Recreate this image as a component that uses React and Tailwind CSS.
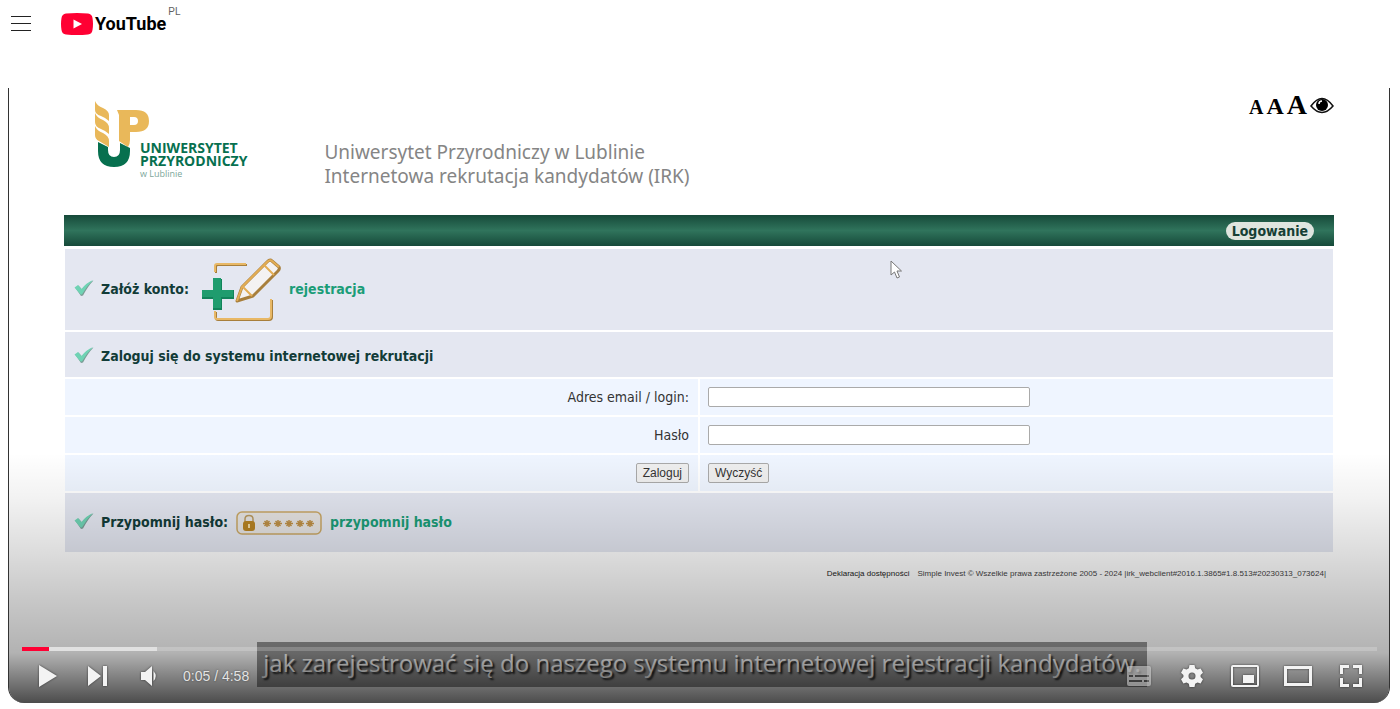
import { useState } from 'react';

function CheckMark() {
  return (
    <svg width="20" height="18" viewBox="0 0 20 18" className="mb-1 shrink-0" aria-hidden="true">
      <path d="M1.5 9 4.5 6.5 8 10.5 Q12 4.500 19.5 1.500 Q14 7 9 16.500 L7 17Z" fill="#7a9a94" />
      <path d="M0.5 8.500 4 6 7.500 10 Q12 4 19 1 Q13 7 8 15.500 L6.500 15.500Z" fill="#6fd3b4" />
    </svg>
  );
}

function UniversityLogo() {
  return (
    <div className="flex items-start">
      <svg width="56" height="68" viewBox="0 0 56 68" className="shrink-0" aria-hidden="true">
        <g fill="#e9b85a">
          <path d="M1 0Q3 5 9 7Q15 10 15 14V20Q12 17 7 15Q1 13 1 9Z" />
          <path d="M1 12Q3 17 9 19Q15 22 15 27V33Q12 30 7 28Q1 26 1 21Z" />
          <path d="M1 25Q3 30 9 32Q15 35 15 40V46L5 40Q1 38 1 34Z" />
          <path fillRule="evenodd" d="M23 9H42Q55 9 55 20T42 31H36V39Q36 43 34 46L25 40V14ZM36 16V24H40Q44 24 44 20T40 16Z" />
        </g>
        <path d="M4 41 14 46V49Q14 56 20 56T26 49V42L36 47V50Q36 66 20 66T4 50Z" fill="#07704f" />
      </svg>
      <div className="-ml-[10px] mt-10 font-['Open_Sans','Noto_Sans',sans-serif] text-[#07704f]">
        <p className="text-[14px] leading-[13px] font-bold">UNIWERSYTET</p>
        <p className="text-[14px] leading-[13px] font-bold">PRZYRODNICZY</p>
        <p className="text-[9px] leading-[13px] text-[#7ca79a]">w Lublinie</p>
      </div>
    </div>
  );
}

function RegisterIcon() {
  return (
    <svg width="80" height="64" viewBox="0 0 80 64" className="shrink-0" aria-hidden="true">
      <g fill="none" strokeLinejoin="round">
        <path d="M15 15V9Q15 7 17 7H46 M15 54V60Q15 62 17 62H68Q71 62 71 59V42" stroke="#a87f3c" strokeWidth="2" />
        <path d="M14 14V8Q14 6 16 6H45 M14 53V59Q14 61 16 61H67Q70 61 70 58V41" stroke="#e8b866" strokeWidth="2" />
        <path d="M36 43 41 29 66 4Q69 1 71 3L78 9Q79 11 77 13L52 38Z" fill="#f4f2f2" stroke="#a87f3c" strokeWidth="3" />
        <path d="M36 43 41 29 66 4Q69 1 71 3L78 9 M63 7 73 17 M42 29 51 38" stroke="#e3ad55" strokeWidth="2" />
      </g>
      <path d="M12 21H21V32H33V41H21V52H12V41H1V32H12Z" fill="#11835a" />
      <path d="M12 20H20V32H32V39H20V50H12V39H1V32H12Z" fill="#1f9c6e" />
    </svg>
  );
}

function PasswordIcon() {
  return (
    <svg width="86" height="24" viewBox="0 0 86 24" className="shrink-0" aria-hidden="true">
      <rect x="1" y="1" width="84" height="22" rx="5" fill="#e6e4e2" stroke="#c9a765" strokeWidth="1.500" />
      <path d="M9 11V8Q9 4.500 13 4.500T17 8V11" fill="none" stroke="#b99a61" strokeWidth="1.500" />
      <rect x="7" y="10" width="12" height="10" rx="3" fill="#b78322" />
      <path d="M12 13H14V17H12Z" fill="#efd9a4" />
      <path
        d="M27 12.500H35M31 9V16M28.500 10 33.500 15M33.500 10 28.500 15M38 12.500H46M42 9V16M39.500 10 44.500 15M44.500 10 39.500 15M49 12.500H57M53 9V16M50.500 10 55.500 15M55.500 10 50.500 15M60 12.500H68M64 9V16M61.500 10 66.500 15M66.500 10 61.500 15M70 12.500H78M74 9V16M71.500 10 76.500 15M76.500 10 71.500 15"
        stroke="#bd8f45"
        strokeWidth="1.500"
      />
    </svg>
  );
}

function EyeIcon() {
  return (
    <svg width="24" height="18" viewBox="0 0 24 18" aria-hidden="true">
      <path d="M1 10Q12-5 23 10Q12 23 1 10Z" fill="#fff" stroke="#111" strokeWidth="1.500" />
      <circle cx="12" cy="9" r="6" fill="#000" />
      <path d="M9 8Q9 5 12 5" fill="none" stroke="#fff" strokeWidth="1.500" />
    </svg>
  );
}

function PlayerButton({ label, className = 'w-[53px]', children }) {
  return (
    <button type="button" aria-label={label} className={`flex h-12 items-center justify-center ${className}`}>
      <svg width="36" height="36" viewBox="0 0 36 36" fill="#f3f3f3" className="drop-shadow-[0_0_1px_rgba(0,0,0,0.6)]">
        {children}
      </svg>
    </button>
  );
}

function Masthead() {
  return (
    <header className="flex h-12 items-center gap-7 px-[9px]">
      <button type="button" aria-label="Menu">
        <svg width="24" height="24" viewBox="0 0 24 24" fill="none" stroke="#222" strokeWidth="1">
          <path d="M2 4.500H22M2 11.500H22M2 18.500H22" />
        </svg>
      </button>
      <a href="#" className="flex items-center gap-0.5" aria-label="YouTube PL">
        <svg width="32" height="22" viewBox="0 0 32 22" aria-hidden="true">
          <path d="M5 .5Q16-.5 27 .5Q31 1 31.500 5Q32.500 11 31.500 17Q31 21 27 21.500Q16 22.500 5 21.500Q1 21 .5 17Q-.5 11 .5 5Q1 1 5 .5Z" fill="#ff0033" />
          <path d="M12.500 6.500V15.500L21 11Z" fill="#fff" />
        </svg>
        <span className="font-['Roboto',sans-serif] text-[18px] leading-6 font-bold text-black">YouTube</span>
        <span className="mb-6 font-['Liberation_Sans',sans-serif] text-[10px] leading-3 text-[#606060]">PL</span>
      </a>
    </header>
  );
}

function RecruitmentPage() {
  const [login, setLogin] = useState('');
  const [password, setPassword] = useState('');

  const handleReset = () => {
    setLogin('');
    setPassword('');
  };

  return (
    <div className="px-[55px] pt-[13px] pb-[123px] font-['DejaVu_Sans_Condensed','Noto_Sans',sans-serif]">
      <div className="flex h-[114px] items-start justify-between">
        <div className="flex gap-[77px] pl-[30px]">
          <UniversityLogo />
          <h1 className="mt-[39px] font-['Noto_Sans',sans-serif] text-[19px] leading-6 text-[#858585]">
            Uniwersytet Przyrodniczy w Lublinie
            <br />
            Internetowa rekrutacja kandydatów (IRK)
          </h1>
        </div>
        <div className="-mt-2 flex items-baseline gap-[3px] font-['Liberation_Serif',serif] font-bold text-black">
          <button type="button" className="text-[20px] leading-6">A</button>
          <button type="button" className="text-[24px] leading-6">A</button>
          <button type="button" className="text-[28px] leading-6">A</button>
          <button type="button" aria-label="Kontrast">
            <EyeIcon />
          </button>
        </div>
      </div>

      <nav className="flex h-[31px] items-center justify-end bg-linear-to-b from-[#164a3a] via-[#30745c] to-[#164a3a] pr-5">
        <a href="#" className="rounded-full bg-[#dfe5df] px-[6px] text-[14px] leading-[18px] font-bold text-[#163f35]">
          Logowanie
        </a>
      </nav>

      <form className="mx-px mt-[3px] flex flex-col gap-0.5 text-[14px] text-[#333]" onSubmit={(e) => e.preventDefault()}>
        <div className="flex h-[81px] items-center bg-[#e4e7f1] pl-[9px] font-bold text-[#123c38]">
          <CheckMark />
          <span className="ml-[7px]">Załóż konto:</span>
          <span className="ml-3">
            <RegisterIcon />
          </span>
          <a href="#" className="ml-2 text-[#1b9d78]">rejestracja</a>
        </div>
        <div className="flex h-[45px] items-center bg-[#e4e7f1] pt-1 pl-[9px] font-bold text-[#123c38]">
          <CheckMark />
          <h2 className="ml-[7px]">Zaloguj się do systemu internetowej rekrutacji</h2>
        </div>
        <div className="grid h-9 grid-cols-2 gap-0.5">
          <div className="flex items-center justify-end bg-[#eff5ff] pr-[9px]">
            <label htmlFor="login">Adres email / login:</label>
          </div>
          <div className="flex items-center bg-[#eff5ff] pl-2">
            <input
              id="login"
              type="text"
              value={login}
              onChange={(e) => setLogin(e.target.value)}
              className="h-5 w-[322px] rounded-xs border border-[#aaa] bg-white px-1"
            />
          </div>
        </div>
        <div className="grid h-9 grid-cols-2 gap-0.5">
          <div className="flex items-center justify-end bg-[#eff5ff] pr-[9px]">
            <label htmlFor="password">Hasło</label>
          </div>
          <div className="flex items-center bg-[#eff5ff] pl-2">
            <input
              id="password"
              type="password"
              value={password}
              onChange={(e) => setPassword(e.target.value)}
              className="h-5 w-[322px] rounded-xs border border-[#aaa] bg-white px-1"
            />
          </div>
        </div>
        <div className="grid h-9 grid-cols-2 gap-0.5 font-['Liberation_Sans',sans-serif] text-[12px]">
          <div className="flex items-center justify-end bg-[#eff5ff] pr-[9px]">
            <button type="submit" className="h-5 rounded-xs border border-[#aaa] bg-[#efefef] px-[6px]">Zaloguj</button>
          </div>
          <div className="flex items-center bg-[#eff5ff] pl-2">
            <button type="button" onClick={handleReset} className="h-5 rounded-xs border border-[#aaa] bg-[#efefef] px-[6px]">
              Wyczyść
            </button>
          </div>
        </div>
        <div className="flex h-[59px] items-center bg-[#e4e7f1] pl-[9px] font-bold text-[#123c38]">
          <CheckMark />
          <span className="ml-[7px]">Przypomnij hasło:</span>
          <span className="ml-2">
            <PasswordIcon />
          </span>
          <a href="#" className="ml-2 text-[#1b9d78]">przypomnij hasło</a>
        </div>
      </form>

      <footer className="mt-4 flex justify-end gap-2 pr-2 font-['Liberation_Sans',sans-serif] text-[8px] leading-3 text-[#444]">
        <a href="#" className="text-[#222]">Deklaracja dostępności</a>
        <span>Simple Invest © Wszelkie prawa zastrzeżone 2005 - 2024 |irk_webclient#2016.1.3865#1.8.513#20230313_073624|</span>
      </footer>
    </div>
  );
}

function Controls() {
  return (
    <div className="absolute inset-x-0 bottom-0 pr-3 pb-0.5 pl-[13px]">
      <div className="flex h-1 bg-white/20">
        <div className="w-[2%] bg-[#ff0033]" />
        <div className="w-[8%] bg-white/50" />
      </div>
      <div className="flex h-[50px] items-center justify-between">
        <div className="flex items-center">
          <PlayerButton label="Odtwórz" className="w-[51px]">
            <path d="M9 7V29L27 18Z" />
          </PlayerButton>
          <PlayerButton label="Następny" className="w-[51px]">
            <path d="M7 8V28L20 18ZM22 8H26V28H22Z" />
          </PlayerButton>
          <PlayerButton label="Wycisz" className="w-[51px]">
            <path d="M9 14V22H13L20 28V8L13 14ZM21.500 13Q26 18 21.500 23Z" />
          </PlayerButton>
          <span className="ml-2 font-['Liberation_Sans',sans-serif] text-[14px] text-[#e4e4e4] text-shadow-[0_0_2px_rgba(0,0,0,0.5)]">
            0:05 / 4:58
          </span>
        </div>
        <div className="flex items-center">
          <PlayerButton label="Napisy">
            <path
              fillRule="evenodd"
              opacity="0.5"
              d="M8 8H28Q30 8 30 10V26Q30 28 28 28H8Q6 28 6 26V10Q6 8 8 8ZM8 17V19H12V17ZM14 17V19H28V17ZM8 22V24H21V22ZM23 22V24H28V22Z"
            />
          </PlayerButton>
          <PlayerButton label="Ustawienia">
            <path
              fillRule="evenodd"
              d="M15.500 7H20.500L21.200 10.200L23.500 11.500L26.600 10.500L29 14.800L26.600 17V19L29 21.200L26.600 25.500L23.500 24.500L21.200 25.800L20.500 29H15.500L14.800 25.800L12.500 24.500L9.400 25.500L7 21.200L9.400 19V17L7 14.800L9.400 10.500L12.500 11.500L14.800 10.200ZM18 14.500A3.500 3.500 0 1 0 18 21.500A3.500 3.500 0 1 0 18 14.500Z"
            />
          </PlayerButton>
          <PlayerButton label="Miniodtwarzacz">
            <path fillRule="evenodd" d="M6 7H30Q32 7 32 9V27Q32 29 30 29H6Q4 29 4 27V9Q4 7 6 7ZM6 9V27H30V9ZM16 17H27V25H16Z" />
          </PlayerButton>
          <PlayerButton label="Tryb kinowy">
            <path fillRule="evenodd" d="M4 8H32V28H4ZM7 11V25H29V11Z" />
          </PlayerButton>
          <PlayerButton label="Pełny ekran">
            <path d="M7 7H16V10H10V16H7ZM20 7H29V16H26V10H20ZM7 20H10V26H16V29H7ZM26 20H29V29H20V26H26Z" />
          </PlayerButton>
        </div>
      </div>
    </div>
  );
}

export default function App() {
  return (
    <div className="bg-white">
      <Masthead />
      <main className="relative mt-10 mr-[10px] ml-[8px] overflow-hidden rounded-b-2xl border-x border-[#333] bg-white">
        <RecruitmentPage />
        <svg width="14" height="20" viewBox="0 0 14 20" className="absolute top-[172px] left-[881px]" aria-hidden="true">
          <path d="M1 1V15L4.500 12L7 18L9.500 17L7 11H11.500Z" fill="#fff" stroke="#777" />
        </svg>
        <div className="absolute inset-x-0 bottom-4 flex justify-center pl-[6px]">
          <p className="bg-black/42 px-[6px] pb-1 font-['Open_Sans',sans-serif] text-[24px] leading-[41px] whitespace-nowrap text-white text-shadow-[2px_2px_2px_rgba(0,0,0,0.9)]">
            jak zarejestrować się do naszego systemu internetowej rejestracji kandydatów.
          </p>
        </div>
        <div className="pointer-events-none absolute inset-x-0 bottom-0 h-[250px] bg-[linear-gradient(to_bottom,rgba(0,0,0,0)_0%,rgba(0,0,0,0.05)_18%,rgba(0,0,0,0.13)_38%,rgba(0,0,0,0.22)_59%,rgba(0,0,0,0.30)_80%,rgba(0,0,0,0.50)_90%,rgba(0,0,0,0.70)_100%)]" />
        <Controls />
      </main>
    </div>
  );
}
